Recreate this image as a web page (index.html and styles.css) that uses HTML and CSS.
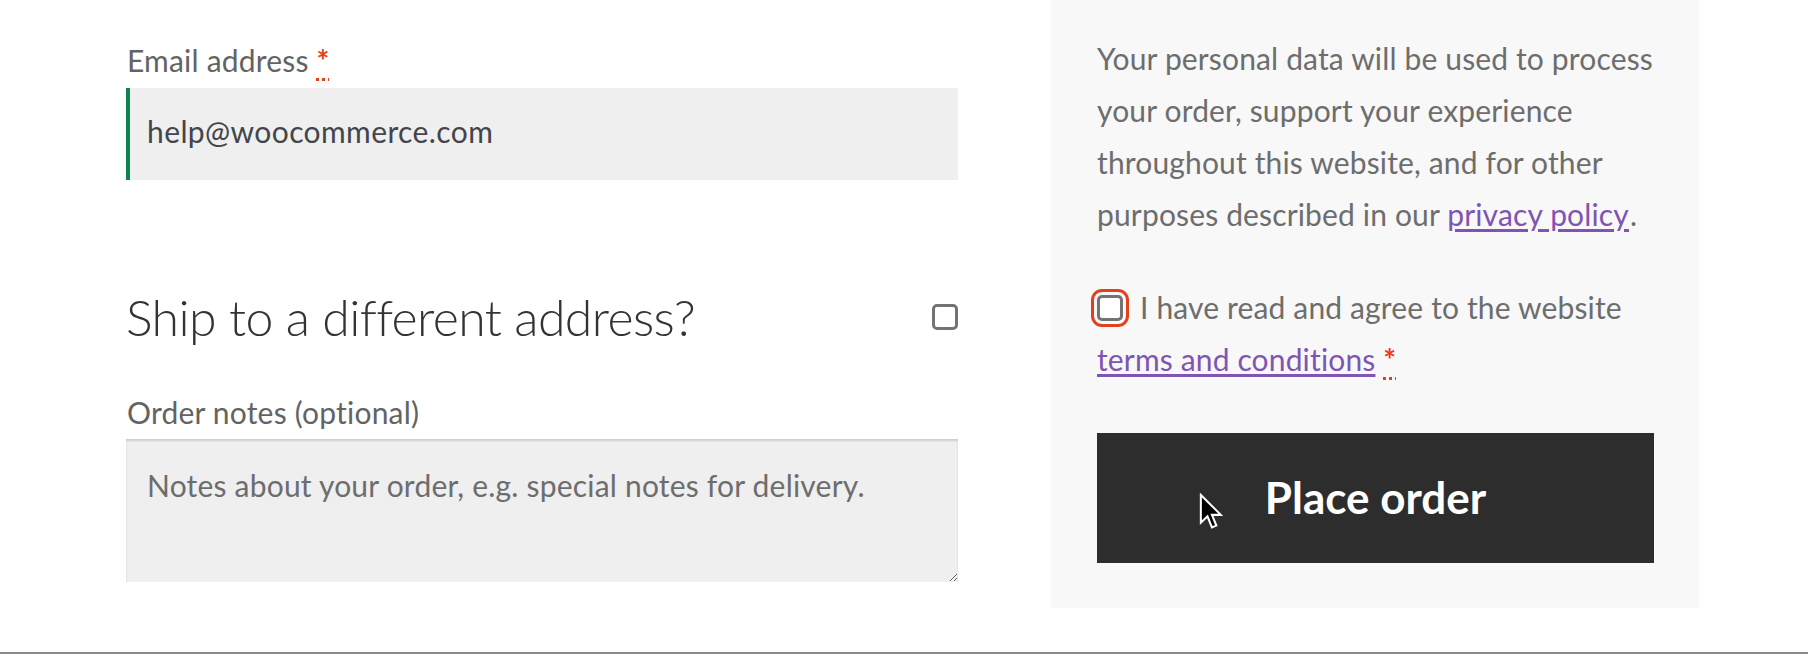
FILE: index.html
```html
<!DOCTYPE html>
<html lang="en">
<head>
<meta charset="utf-8">
<title>Checkout</title>
<link rel="stylesheet" href="styles.css">
</head>
<body>
<div class="page">
  <div class="left-col">
    <label class="field-label" for="email">Email address <abbr class="required" title="required">*</abbr></label>
    <input class="text-input validated" id="email" type="email" value="help@woocommerce.com">

    <div class="ship-row">
      <h3 class="ship-heading">Ship to a different address?</h3>
      <span class="checkbox"></span>
    </div>

    <label class="field-label" for="notes">Order notes (optional)</label>
    <textarea class="notes" id="notes" placeholder="Notes about your order, e.g. special notes for delivery."></textarea>
  </div>

  <div class="review-col">
    <p class="privacy">Your personal data will be used to process your order, support your experience throughout this website, and for other purposes described in our <a href="#">privacy policy</a><span class="stop">.</span></p>
    <p class="terms"><span class="checkbox invalid"></span>I have read and agree to the website <a href="#">terms and conditions</a>&nbsp;<abbr class="required" title="required">*</abbr></p>
    <button class="place-order" type="button">Place order</button>
  </div>
</div>
<svg class="cursor" width="24" height="38" viewBox="0 0 13 20.5" aria-hidden="true">
  <path d="M1 1 L1 16 L4.6 12.6 L7 18.6 L9.4 17.6 L7 11.8 L11.8 11.8 Z" fill="#000" stroke="#fff" stroke-width="1.1" stroke-linejoin="miter"/>
</svg>
</body>
</html>
```

FILE: styles.css
```css
html, body {
  margin: 0;
  padding: 0;
  background: #ffffff;
}

body {
  width: 1808px;
  height: 654px;
  overflow: hidden;
  position: relative;
  font-family: Lato, "Liberation Sans", sans-serif;
  color: #6d6d6d;
}

.page {
  display: flex;
  box-sizing: border-box;
  height: 654px;
  padding-left: 126px;
  border-bottom: 2px solid #8a8a8a;
}

.left-col {
  width: 832px;
  padding-top: 34px;
  display: flex;
  flex-direction: column;
}

.field-label {
  display: block;
  font-size: 30px;
  line-height: 52px;
  letter-spacing: 0.2px;
  color: #636363;
  padding-left: 1px;
}

.required {
  color: #e2401c;
  text-decoration: underline dotted #e2401c;
  text-decoration-thickness: 3px;
  text-underline-offset: 6px;
  font-weight: 700;
  cursor: help;
}

.text-input {
  display: block;
  box-sizing: border-box;
  width: 832px;
  height: 92px;
  margin: 2px 0 0 0;
  padding: 0 20px 7px 21px;
  border: 0;
  outline: 0;
  background: #efefef;
  font-family: Lato, "Liberation Sans", sans-serif;
  font-size: 30px;
  letter-spacing: 0.4px;
  color: #43454b;
  -webkit-appearance: none;
  appearance: none;
}

.validated {
  box-shadow: inset 4px 0 0 #0f834d;
}

.ship-row {
  display: flex;
  align-items: center;
  justify-content: space-between;
  margin-top: 102px;
  height: 70px;
}

.ship-heading {
  margin: 0;
  font-size: 50px;
  line-height: 70px;
  font-weight: 300;
  letter-spacing: -0.6px;
  color: #333333;
}

.checkbox {
  display: inline-block;
  box-sizing: border-box;
  width: 26px;
  height: 26px;
  border: 3px solid #737373;
  border-radius: 5px;
  background: #ffffff;
}

.ship-row .checkbox {
  margin-top: 0;
}

.ship-row + .field-label {
  margin-top: 34px;
}

.notes {
  display: block;
  box-sizing: border-box;
  width: 832px;
  height: 143px;
  margin: 1px 0 0 0;
  padding: 20px 20px 0 21px;
  border: 0;
  outline: 0;
  background: #efefef;
  box-shadow: inset 0 2px 2px rgba(0, 0, 0, 0.14);
  font-family: Lato, "Liberation Sans", sans-serif;
  font-size: 30px;
  line-height: 52px;
  letter-spacing: 0.2px;
  color: #43454b;
  resize: vertical;
}

.notes::placeholder {
  color: #6d6d6d;
  opacity: 1;
}

.review-col {
  box-sizing: border-box;
  width: 648px;
  height: 608px;
  margin-left: 93px;
  padding: 32px 45px 0 46px;
  background: #f8f8f8;
}

.privacy,
.terms {
  margin: 0;
  font-size: 30px;
  line-height: 52px;
  letter-spacing: 0.15px;
  color: #6d6d6d;
}

.stop {
  margin-left: 1px;
}

.terms {
  margin-top: 41px;
}

.terms .checkbox {
  vertical-align: -2px;
  margin-right: 17px;
}

.checkbox.invalid {
  outline: 3px solid #e2401c;
  outline-offset: 3px;
}

a {
  color: #7f54b3;
  text-decoration: underline;
  text-decoration-thickness: 3px;
  text-underline-offset: 3px;
}

.place-order {
  display: block;
  width: 557px;
  height: 130px;
  margin-top: 48px;
  padding: 0 0 3px 0;
  border: 0;
  background: #2d2d2d;
  color: #ffffff;
  font-family: Lato, "Liberation Sans", sans-serif;
  font-size: 44px;
  font-weight: 700;
  text-align: center;
  cursor: pointer;
}

.cursor {
  position: absolute;
  left: 1199px;
  top: 493px;
}
```
